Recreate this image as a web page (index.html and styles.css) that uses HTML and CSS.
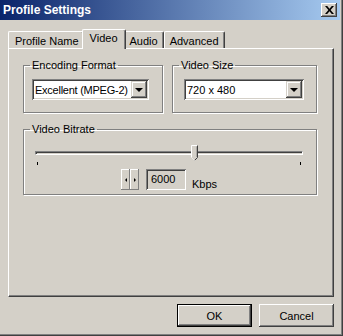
FILE: index.html
```html
<!DOCTYPE html>
<html>
<head>
<meta charset="utf-8">
<link rel="stylesheet" href="styles.css">
</head>
<body>
<div class="window">
  <div class="titlebar">
    <span class="title">Profile Settings</span>
    <span class="close"><svg width="9" height="8" viewBox="0 0 9 8"><path d="M0 0h2.2l2.3 2.7 2.3-2.7h2.2l-3.4 4 3.4 4h-2.2l-2.3-2.7-2.3 2.7h-2.2l3.4-4z" fill="#000"/></svg></span>
  </div>
  <div class="body">
    <div class="tabs">
      <div class="tab first">Profile Name</div>
      <div class="tab active">Video</div>
      <div class="tab">Audio</div>
      <div class="tab">Advanced</div>
    </div>
    <div class="panel">
      <div class="row">
        <fieldset class="group g-enc">
          <legend>Encoding Format</legend>
          <div class="combo c-enc"><span class="val">Excellent (MPEG-2)</span><span class="drop"><i class="tri"></i></span></div>
        </fieldset>
        <fieldset class="group g-size">
          <legend>Video Size</legend>
          <div class="combo c-size"><span class="val">720 x 480</span><span class="drop"><i class="tri"></i></span></div>
        </fieldset>
      </div>
      <fieldset class="group g-rate">
        <legend>Video Bitrate</legend>
        <div class="slider">
          <div class="track"></div>
          <div class="thumb"><svg width="7" height="16" viewBox="0 0 7 16"><path d="M0.5 12.5V0.5H6.5" fill="none" stroke="#fff"/><path d="M6.5 0.5V12.5L3.5 15.5" fill="none" stroke="#404040"/><path d="M0.5 12.5L3.5 15.5" fill="none" stroke="#fff"/><path d="M5.5 1.5V12" fill="none" stroke="#808080"/><rect x="1" y="1" width="4.5" height="11.5" fill="#d4d0c8"/><path d="M1 12.5L3.5 15" stroke="#d4d0c8"/></svg></div>
          <div class="ticks"><i></i><i></i></div>
        </div>
        <div class="rate-row">
          <div class="spin"><span class="sb"><i class="la"></i></span><span class="sb"><i class="ra"></i></span></div>
          <div class="edit">6000</div>
          <span class="unit">Kbps</span>
        </div>
      </fieldset>
    </div>
    <div class="buttons">
      <div class="btn default"><span>OK</span></div>
      <div class="btn"><span>Cancel</span></div>
    </div>
  </div>
</div>
</body>
</html>
```

FILE: styles.css
```css
html, body {
  margin: 0;
  padding: 0;
  background: #d4d0c8;
}
body {
  width: 343px;
  height: 336px;
  overflow: hidden;
  font-family: "Liberation Sans", Arial, sans-serif;
  font-size: 11px;
  color: #000;
}
.window {
  width: 343px;
  height: 336px;
  box-sizing: border-box;
  background: #d4d0c8;
  box-shadow: inset -1px -1px 0 #404040, inset -2px -2px 0 #808080;
  padding: 0 3px 3px 0;
}
.titlebar {
  height: 20px;
  display: flex;
  align-items: center;
  justify-content: space-between;
  background: linear-gradient(to right, #0a246a, #a6caf0);
  padding: 0 3px 0 3px;
}
.title {
  color: #fff;
  font-weight: bold;
  font-size: 12px;
}
.close {
  width: 16px;
  height: 14px;
  box-sizing: border-box;
  background: #d4d0c8;
  box-shadow: inset -1px -1px 0 #404040, inset 1px 1px 0 #fff, inset -2px -2px 0 #808080;
  display: flex;
  align-items: center;
  justify-content: center;
  padding-bottom: 1px;
}
.body {
  padding: 9px 0 0 8px;
}
.tabs {
  display: flex;
  align-items: flex-end;
  height: 19px;
  position: relative;
  z-index: 1;
}
.tab {
  height: 17px;
  box-sizing: border-box;
  padding: 2px 5px 0 5px;
  border-top: 1px solid #fff;
  border-left: 1px solid #fff;
  border-right: 1px solid #404040;
  box-shadow: inset -1px 0 0 #808080;
  border-radius: 2px 2px 0 0;
  line-height: 14px;
}
.tab.first { margin-left: 0; padding: 2px 4px 0 6px; }
.tab.active {
  height: 20px;
  margin: 0 -2px -1px -2px;
  padding: 1px 7px 0 7px;
  background: #d4d0c8;
  z-index: 2;
  position: relative;
}
.panel {
  width: 326px;
  height: 249px;
  box-sizing: border-box;
  border-top: 1px solid #fff;
  border-left: 1px solid #fff;
  border-right: 1px solid #404040;
  border-bottom: 1px solid #404040;
  box-shadow: inset -1px -1px 0 #808080;
  padding: 10px 0 0 14px;
}
.row {
  display: flex;
  gap: 9px;
}
.group {
  margin: 0;
  padding: 0;
  border: 1px solid #808080;
  box-shadow: inset 1px 1px 0 #fff, 1px 1px 0 #fff;
  min-width: 0;
  box-sizing: border-box;
}
.group legend {
  padding: 0 2px;
  margin-left: 6px;
  line-height: 12px;
}
.g-enc { width: 140px; height: 54px; }
.g-size { width: 145px; height: 54px; }
.g-rate { width: 294px; height: 72px; margin-top: 10px; }
.combo {
  height: 21px;
  box-sizing: border-box;
  background: #fff;
  box-shadow: inset 1px 1px 0 #808080, inset -1px -1px 0 #fff, inset 2px 2px 0 #404040, inset -2px -2px 0 #d4d0c8;
  display: flex;
  align-items: center;
  justify-content: space-between;
  padding: 2px 2px 2px 3px;
  white-space: nowrap;
  margin-top: 8px;
}
.c-enc { width: 117px; margin-left: 8px; letter-spacing: -0.25px; }
.c-size { width: 120px; margin-left: 11px; }
.drop {
  width: 16px;
  height: 17px;
  box-sizing: border-box;
  background: #d4d0c8;
  box-shadow: inset -1px -1px 0 #404040, inset 1px 1px 0 #d4d0c8, inset -2px -2px 0 #808080, inset 2px 2px 0 #fff;
  display: flex;
  align-items: center;
  justify-content: center;
}
.tri {
  width: 0;
  height: 0;
  border-left: 4px solid transparent;
  border-right: 4px solid transparent;
  border-top: 4px solid #000;
  margin-top: 1px;
}
.slider {
  position: relative;
  height: 26px;
  margin: 8px 0 0 11px;
  width: 268px;
}
.track {
  position: absolute;
  left: 0;
  right: 0;
  top: 8px;
  height: 4px;
  box-sizing: border-box;
  border-top: 1px solid #808080;
  border-left: 1px solid #808080;
  border-bottom: 1px solid #fff;
  border-right: 1px solid #fff;
  box-shadow: inset 1px 1px 0 #404040, inset -1px -1px 0 #d4d0c8;
}
.thumb {
  position: absolute;
  left: 156px;
  top: 2px;
  width: 7px;
  height: 16px;
}
.thumb svg { display: block; }
.ticks {
  position: absolute;
  left: 2px;
  right: 2px;
  top: 19px;
  display: flex;
  justify-content: space-between;
}
.ticks i {
  display: block;
  width: 1px;
  height: 3px;
  background: #000;
}
.rate-row {
  display: flex;
  align-items: center;
  margin-left: 97px;
}
.spin {
  display: flex;
  width: 18px;
  height: 21px;
  box-sizing: border-box;
  box-shadow: inset -1px -1px 0 #404040, inset 1px 1px 0 #fff;
}
.sb {
  flex: 1;
  display: flex;
  align-items: center;
  justify-content: center;
  box-shadow: inset -1px -1px 0 #808080, inset 1px 1px 0 #fff;
}
.la, .ra {
  width: 0;
  height: 0;
  border-top: 2px solid transparent;
  border-bottom: 2px solid transparent;
}
.la { border-right: 2px solid #000; }
.ra { border-left: 2px solid #000; }
.edit {
  width: 40px;
  height: 21px;
  box-sizing: border-box;
  margin-left: 7px;
  background: #d4d0c8;
  box-shadow: inset 1px 1px 0 #808080, inset -1px -1px 0 #fff, inset 2px 2px 0 #404040, inset -2px -2px 0 #d4d0c8;
  padding: 3px 0 0 5px;
  line-height: 14px;
}
.unit {
  margin-left: 6px;
  margin-top: 8px;
}
.buttons {
  display: flex;
  justify-content: flex-end;
  gap: 7px;
  margin-top: 7px;
  width: 326px;
}
.btn {
  width: 75px;
  height: 23px;
  box-sizing: border-box;
  display: flex;
  align-items: center;
  justify-content: center;
  box-shadow: inset -1px -1px 0 #404040, inset 1px 1px 0 #fff, inset -2px -2px 0 #808080;
}
.btn.default {
  border: 1px solid #000;
}
```
